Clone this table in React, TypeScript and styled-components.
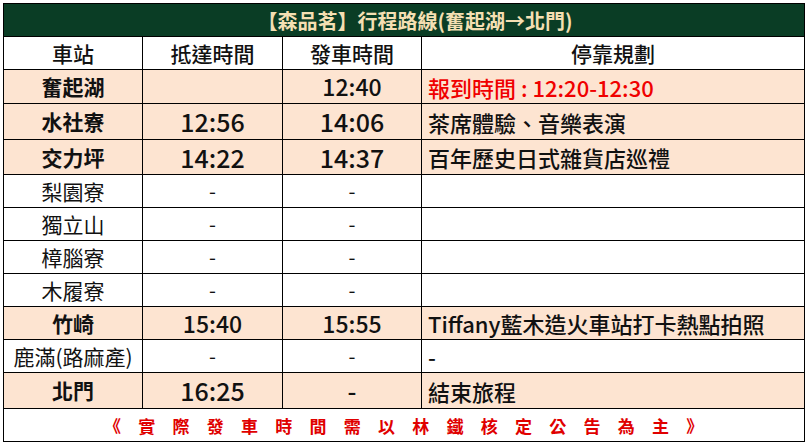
import React from "react";
import styled, { createGlobalStyle } from "styled-components";

const GlobalStyle = createGlobalStyle`
  html, body {
    margin: 0;
    padding: 0;
    background: #ffffff;
  }
  body {
    font-family: "Noto Sans CJK TC", "Noto Sans", sans-serif;
    color: #111;
  }
`;

type Stop = {
  name: string;
  arrive: string;
  depart: string;
  note: string;
  main: boolean;
  height: number;
  timeSize: number;
  red?: boolean;
};

const stops: Stop[] = [
  { name: "奮起湖", arrive: "", depart: "12:40", note: "報到時間 : 12:20-12:30", main: true, height: 34, timeSize: 23, red: true },
  { name: "水社寮", arrive: "12:56", depart: "14:06", note: "茶席體驗、音樂表演", main: true, height: 36, timeSize: 25 },
  { name: "交力坪", arrive: "14:22", depart: "14:37", note: "百年歷史日式雜貨店巡禮", main: true, height: 35, timeSize: 25 },
  { name: "梨園寮", arrive: "-", depart: "-", note: "", main: false, height: 33, timeSize: 20 },
  { name: "獨立山", arrive: "-", depart: "-", note: "", main: false, height: 33, timeSize: 20 },
  { name: "樟腦寮", arrive: "-", depart: "-", note: "", main: false, height: 33, timeSize: 20 },
  { name: "木履寮", arrive: "-", depart: "-", note: "", main: false, height: 33, timeSize: 20 },
  { name: "竹崎", arrive: "15:40", depart: "15:55", note: "Tiffany藍木造火車站打卡熱點拍照", main: true, height: 33, timeSize: 23 },
  { name: "鹿滿(路麻產)", arrive: "-", depart: "-", note: "-", main: false, height: 33, timeSize: 20 },
  { name: "北門", arrive: "16:25", depart: "-", note: "結束旅程", main: true, height: 36, timeSize: 25 },
];

const App = () => {
  return (
    <>
      <GlobalStyle />
      <Sheet>
        <TitleBar>【森品茗】行程路線(奮起湖→北門)</TitleBar>
        <Row $height={33}>
          <HeadCell>車站</HeadCell>
          <HeadCell>抵達時間</HeadCell>
          <HeadCell>發車時間</HeadCell>
          <HeadCell $last>停靠規劃</HeadCell>
        </Row>
        {stops.map((s) => (
          <Row key={s.name} $height={s.height} $peach={s.main}>
            <StationCell $main={s.main}>{s.name}</StationCell>
            <TimeCell $size={s.timeSize} $main={s.main}>
              {s.arrive}
            </TimeCell>
            <TimeCell $size={s.timeSize} $main={s.main}>
              {s.depart}
            </TimeCell>
            <NoteCell $red={s.red}>{s.note}</NoteCell>
          </Row>
        ))}
        <Footer>《 實 際 發 車 時 間 需 以 林 鐵 核 定 公 告 為 主 》</Footer>
      </Sheet>
    </>
  );
};

const Sheet = styled.div`
  width: 802px;
  margin: 3px 0 0 3px;
  box-sizing: border-box;
  border: 1.5px solid #000;
  display: flex;
  flex-direction: column;
`;

const TitleBar = styled.div`
  height: 33px;
  box-sizing: border-box;
  background-color: #0a3d25;
  color: #f4dfb2;
  font-size: 20px;
  font-weight: 700;
  display: flex;
  align-items: center;
  justify-content: center;
  border-bottom: 1px solid #000;
  padding-left: 22px;
`;

const Row = styled.div<{ $height: number; $peach?: boolean }>`
  height: ${(p) => p.$height}px;
  box-sizing: border-box;
  display: grid;
  grid-template-columns: 139px 140px 139px 1fr;
  background-color: ${(p) => (p.$peach ? "#fde4d1" : "#ffffff")};
  border-bottom: 1px solid #000;
`;

const Cell = styled.div`
  display: flex;
  align-items: center;
  justify-content: center;
  border-right: 1px solid #000;
  white-space: nowrap;
  overflow: hidden;
  line-height: 1;
`;

const HeadCell = styled(Cell)<{ $last?: boolean }>`
  font-size: 21px;
  font-weight: 500;
  border-right: ${(p) => (p.$last ? "none" : "1px solid #000")};
`;

const StationCell = styled(Cell)<{ $main: boolean }>`
  font-size: 21px;
  font-weight: ${(p) => (p.$main ? 700 : 400)};
`;

const TimeCell = styled(Cell)<{ $size: number; $main: boolean }>`
  font-size: ${(p) => p.$size}px;
  font-weight: ${(p) => (p.$main ? 500 : 400)};
`;

const NoteCell = styled(Cell)<{ $red?: boolean }>`
  justify-content: flex-start;
  padding-left: 6px;
  border-right: none;
  font-size: 22px;
  font-weight: 500;
  color: ${(p) => (p.$red ? "#f00000" : "#111")};
`;

const Footer = styled.div`
  height: 32px;
  display: flex;
  align-items: center;
  justify-content: center;
  color: #e00000;
  font-size: 17px;
  font-weight: 700;
  letter-spacing: 6.7px;
  padding-left: 6px;
  white-space: pre;
`;

export default App;
